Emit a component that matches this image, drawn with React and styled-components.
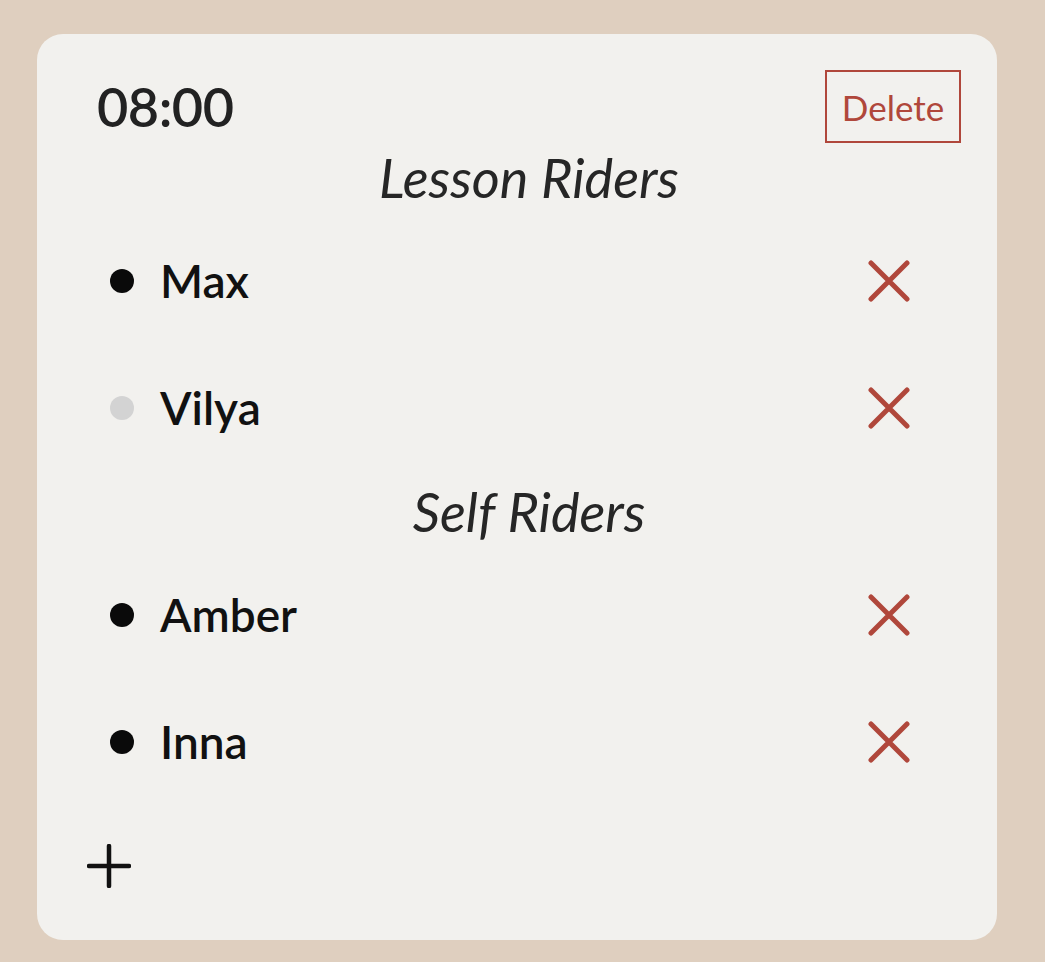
import React from 'react'
import styled, { createGlobalStyle } from 'styled-components'

const GlobalStyle = createGlobalStyle`
  html, body {
    margin: 0;
    padding: 0;
    background: #dfcfbf;
    font-family: Lato, "Open Sans", sans-serif;
  }
`

const Page = styled.div({
    width: "1045px",
    height: "962px",
    padding: "34px 48px 22px 37px",
    boxSizing: "border-box",
})

const Card = styled.div({
    background: "#f2f1ee",
    borderRadius: "26px",
    height: "100%",
    boxSizing: "border-box",
    padding: "36px 36px 0 60px",
    display: "flex",
    flexDirection: "column",
})

const Header = styled.div({
    display: "flex",
    alignItems: "center",
    justifyContent: "space-between",
    height: "73px",
})

const Time = styled.div({
    fontSize: "54px",
    fontWeight: 600,
    color: "#222",
    letterSpacing: "-0.5px",
})

const DeleteButton = styled.button({
    fontFamily: "inherit",
    fontSize: "35px",
    color: "#b0473b",
    background: "transparent",
    border: "2.5px solid #b0473b",
    height: "73px",
    width: "136px",
    padding: 0,
    cursor: "pointer",
})

const Heading = styled.div(props => ({
    height: "74px",
    boxSizing: "border-box",
    paddingBottom: "5px",
    marginTop: props.spaced ? "6px" : "0",
    display: "flex",
    alignItems: "center",
    justifyContent: "center",
    fontSize: "54px",
    fontStyle: "italic",
    color: "#262626",
}))

const Row = styled.div({
    height: "127px",
    display: "flex",
    alignItems: "center",
    paddingLeft: "13px",
    paddingRight: "51px",
    gap: "26px",
})

const Dot = styled.span(props => ({
    width: "24px",
    height: "24px",
    borderRadius: "50%",
    background: props.present ? "#0a0a0a" : "#d3d3d3",
    flexShrink: 0,
}))

const Name = styled.span({
    flex: 1,
    fontSize: "46px",
    fontWeight: 600,
    color: "#111",
})

const IconButton = styled.button({
    background: "transparent",
    border: "none",
    padding: 0,
    width: "42px",
    height: "42px",
    display: "flex",
    cursor: "pointer",
})

const AddRow = styled.div({
    height: "121px",
    display: "flex",
    alignItems: "center",
    marginLeft: "-10px",
})

const Cross = () => (
    <svg width="42" height="42" viewBox="0 0 42 42">
        <path d="M3 3 L39 39 M39 3 L3 39" stroke="#b0473b" strokeWidth="5" strokeLinecap="round" />
    </svg>
)

const Plus = () => (
    <svg width="44" height="44" viewBox="0 0 44 44">
        <path d="M22 2 V42 M2 22 H42" stroke="#111" strokeWidth="4.5" strokeLinecap="round" />
    </svg>
)

const lessonRiders = [
    { name: "Max", present: true },
    { name: "Vilya", present: false },
]
const selfRiders = [
    { name: "Amber", present: true },
    { name: "Inna", present: true },
]

const Rider = ({ name, present }) => (
    <Row>
        <Dot present={present} />
        <Name>{name}</Name>
        <IconButton aria-label={"remove " + name}><Cross /></IconButton>
    </Row>
)

export default function App() {
    return (
        <>
            <GlobalStyle />
            <Page>
                <Card>
                    <Header>
                        <Time>08:00</Time>
                        <DeleteButton>Delete</DeleteButton>
                    </Header>
                    <Heading>Lesson Riders</Heading>
                    {lessonRiders.map(r => <Rider key={r.name} {...r} />)}
                    <Heading spaced>Self Riders</Heading>
                    {selfRiders.map(r => <Rider key={r.name} {...r} />)}
                    <AddRow>
                        <IconButton style={{ width: 44, height: 44 }} aria-label="add rider"><Plus /></IconButton>
                    </AddRow>
                </Card>
            </Page>
        </>
    )
}
